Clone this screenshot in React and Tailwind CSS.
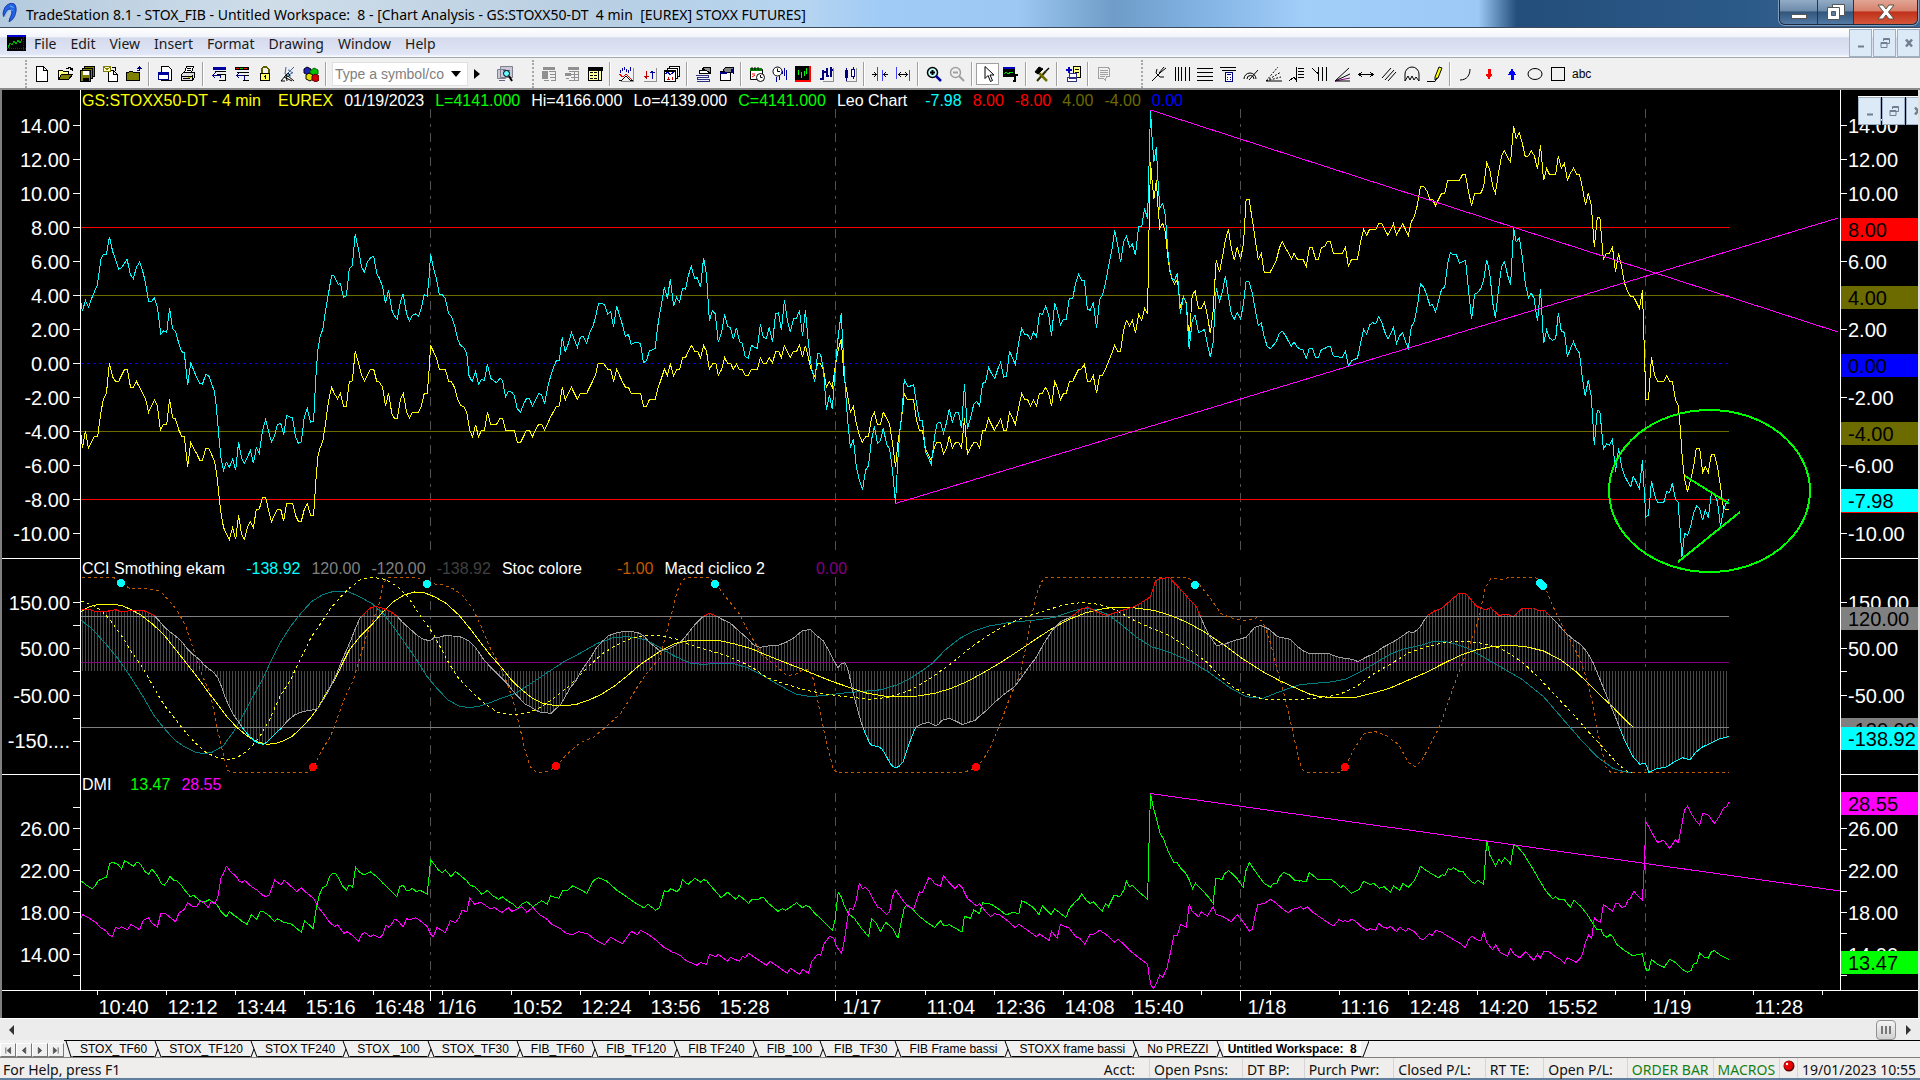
import React from 'react';

// Price and indicator traces. Every series is stored as three tiles, each with
// its own horizontal origin and resolution (points per pixel); vertically three
// points make one pixel.
const TILES = [
  { x: 0, step: 2.376 },
  { x: 640, step: 2.376 },
  { x: 1240, step: 2.306 },
];

const PLOT = { x: 81, y: 90, width: 1759, height: 900 };

const toPoints = (tiles, top) =>
  tiles.flatMap((tile, i) =>
    tile.split(' ').map((pair) => {
      const [px, py] = pair.split(',').map(Number);
      return [TILES[i].x + px / TILES[i].step, top + py / 3];
    })
  );

const leoFast = toPoints(
  [
    '192,636 196,664 203,631 210,652 220,618 231,586 240,506 246,493 253,493 260,440 268,486 275,510 282,538 289,533 302,508 310,555 317,566 324,532 332,516 340,548 346,580 353,634 360,634 367,624 374,652 382,733 389,722 396,727 403,653 410,716 417,724 426,766 432,785 438,788 446,886 453,817 460,840 468,865 475,880 481,883 489,853 496,858 504,885 510,906 514,950 520,1040 525,1105 531,1141 538,1117 545,1131 553,1107 560,1141 567,1055 574,1105 581,1120 588,1101 595,1081 602,1120 609,1073 616,1090 624,1020 631,989 638,1022 645,1057 652,1039 659,1004 667,1000 674,1035 681,976 688,981 695,984 702,1040 709,1060 716,1056 723,980 730,955 738,997 745,993 750,870 755,780 760,742 767,718 773,665 782,600 788,556 794,558 803,583 809,580 816,622 823,618 830,536 837,528 844,433 852,480 859,530 866,547 873,515 880,504 888,499 895,550 902,566 909,590 916,640 923,601 931,660 937,677 944,688 951,636 958,611 966,672 973,694 980,676 987,672 994,679 1001,655 1008,614 1015,618 1019,570 1023,492 1030,535 1037,566 1044,614 1051,614 1058,626 1066,672 1073,680 1080,705 1088,750 1094,766 1102,772 1109,792 1114,856 1122,875 1130,845 1137,883 1144,868 1151,872 1158,823 1166,865 1174,873 1180,878 1188,865 1194,871 1201,920 1208,904 1216,907 1222,917 1229,957 1237,967 1244,942 1251,926 1258,926 1265,948 1272,930 1280,910 1287,914 1294,941 1301,893 1308,860 1315,832 1322,812 1329,811 1336,742 1343,785 1350,762 1358,728 1365,750 1372,772 1379,742 1386,739 1394,760 1401,728 1408,712 1415,682 1422,640 1429,640 1437,645 1444,673 1451,665 1458,712 1465,647 1472,677 1479,705 1486,740 1493,733 1500,764 1508,757 1515,757 1522,762 1529,818 1536,812 1543,782 1550,780 1557,775 1562,715 1567,676',
    '58,592 65,626 72,566 80,648 87,622 94,637 101,595 108,597 115,556 122,529 130,566 136,563 144,592 151,503 158,556 165,692 172,661 179,672 186,757 194,728 201,673 208,709 215,713 222,748 229,713 237,756 243,760 250,800 257,805 265,766 272,772 279,775 286,703 293,743 300,745 307,712 315,757 322,672 329,668 336,720 343,630 350,690 357,727 365,685 372,685 379,661 386,739 393,661 400,760 407,830 415,875 422,790 429,793 436,840 443,961 450,916 457,958 465,820 471,740 478,670 483,790 488,900 494,1000 500,1073 507,1047 514,1130 521,1170 529,1199 536,1140 543,1127 550,1050 557,1009 564,1059 571,1053 578,1015 586,1062 593,1078 600,1140 607,1240 612,1120 617,1030 623,960 628,868 635,888 643,888 650,884 657,940 664,990 671,990 678,1085 685,1103 692,1123 700,1040 706,1000 714,997 721,1029 728,1000 735,956 742,997 750,967 757,969 764,1015 771,883 778,1018 785,985 793,943 800,934 807,949 814,880 821,877 828,832 835,850 843,865 850,838 857,817 864,862 871,858 878,782 885,805 892,823 900,755 907,715 914,733 921,735 928,749 935,727 942,740 949,671 956,673 964,649 971,676 978,737 985,640 992,664 999,706 1006,688 1013,688 1020,625 1028,625 1035,580 1042,553 1049,571 1056,571 1063,658 1070,661 1077,637 1085,715 1092,628 1099,616 1106,580 1113,530 1121,480 1128,421 1135,465 1142,517 1149,455 1156,437 1163,472 1170,463 1177,495 1185,409 1192,410 1199,355 1206,388 1209,250 1213,60 1217,150 1221,215 1227,170 1230,260 1235,355 1242,340 1248,375 1254,480 1259,540 1265,568 1270,570 1277,550 1284,672 1291,619 1298,640 1305,778 1312,690 1319,676 1327,727 1334,725 1341,718 1348,760 1355,802 1362,755 1369,595 1377,634 1384,605 1391,557 1398,620 1405,670 1412,688 1419,667 1427,688 1434,640 1440,574 1447,576 1455,610 1462,660 1469,706 1476,698 1483,740 1490,768 1497,776 1505,766 1512,754 1519,730 1526,724 1534,737 1541,755 1548,769 1554,755 1562,772 1567,776',
    '145,780 153,805 160,774 167,775 174,801 181,801 188,778 195,776 203,769 209,770 215,797 222,800 236,802 243,784 250,828 258,812 271,804 278,760 285,718 292,733 299,704 306,698 313,702 320,679 327,698 334,726 341,747 348,731 354,712 361,760 368,738 375,728 382,757 388,775 395,710 402,695 410,640 416,581 424,592 431,618 438,646 444,643 451,666 458,632 465,598 472,592 479,520 485,488 492,495 499,494 506,520 513,515 520,511 527,600 534,688 541,613 548,608 555,596 562,570 569,509 576,550 583,640 589,684 596,600 603,530 610,515 617,555 624,586 631,415 637,456 644,443 651,500 658,580 665,624 671,608 678,625 686,694 693,596 700,760 707,720 714,745 721,751 728,746 734,668 741,724 748,727 755,800 762,776 769,755 776,778 783,790 789,860 796,919 803,870 810,920 817,1066 824,960 830,964 838,1078 845,1062 852,1066 859,1048 866,1147 873,1075 880,1130 887,1158 894,1175 901,1190 907,1159 914,1177 921,1196 928,1111 932,1200 936,1280 942,1275 949,1172 956,1215 963,1238 970,1236 977,1238 984,1205 991,1207 997,1180 1004,1228 1010,1236 1015,1320 1019,1400 1025,1330 1032,1336 1039,1310 1046,1270 1053,1248 1060,1255 1067,1291 1073,1260 1080,1283 1087,1210 1094,1212 1101,1235 1108,1310 1115,1260 1121,1240 1128,1228',
  ],
  90
);

const leoSlow = toPoints(
  [
    '192,1030 196,1075 203,1022 210,1075 224,1040 232,1040 240,965 246,927 253,908 260,820 268,862 275,874 282,874 289,856 296,838 303,839 310,892 317,892 324,874 332,893 339,910 346,928 353,967 360,947 367,929 374,948 381,1021 388,1003 396,1003 403,928 410,984 417,987 425,1021 432,1039 438,1040 446,1130 453,1057 460,1075 468,1093 475,1111 481,1111 489,1075 496,1075 504,1097 510,1113 516,1165 524,1260 531,1312 538,1332 545,1348 553,1312 560,1348 567,1276 574,1333 581,1348 588,1312 595,1295 602,1312 609,1259 616,1257 624,1222 631,1222 638,1259 645,1295 652,1276 659,1258 667,1258 674,1294 681,1240 695,1240 702,1276 709,1294 716,1294 723,1258 730,1240 738,1276 745,1276 750,1180 755,1100 760,1075 767,1054 773,1005 781,930 788,892 795,912 802,926 809,910 816,948 823,948 830,874 837,873 844,784 852,820 859,856 866,874 873,856 880,838 888,838 895,874 902,877 909,892 916,948 923,910 931,970 937,985 944,985 951,930 958,910 966,967 973,985 980,967 994,967 1001,948 1008,911 1015,911 1019,850 1023,766 1030,785 1037,804 1044,838 1058,838 1066,874 1073,876 1080,892 1088,930 1095,947 1102,950 1109,967 1116,1021 1123,1040 1130,1004 1137,1040 1144,1021 1151,1021 1158,967 1166,1003 1180,1003 1188,985 1194,985 1201,1021 1222,1021 1229,1057 1237,1057 1244,1039 1251,1021 1258,1021 1265,1040 1272,1021 1280,1003 1287,1003 1294,1021 1308,982 1322,949 1329,948 1336,892 1343,930 1350,910 1358,892 1372,928 1379,910 1394,910 1401,892 1415,856 1420,824 1422,820 1434,820 1444,838 1451,838 1458,875 1465,838 1479,875 1486,892 1493,892 1500,910 1522,910 1529,949 1536,948 1543,929 1557,928 1562,900 1567,882',
    '58,838 65,856 72,822 80,858 87,839 94,838 101,803 108,803 115,784 122,766 130,784 137,785 144,803 151,767 158,784 165,838 172,822 180,820 186,857 194,838 201,803 208,820 215,820 222,838 229,822 236,838 243,839 250,857 257,857 265,838 279,838 286,803 293,820 300,820 307,803 315,819 322,785 329,784 336,802 343,767 350,784 357,802 365,784 372,784 379,766 386,802 393,767 400,804 407,840 415,858 422,820 429,822 436,840 443,892 450,875 457,892 465,820 471,780 478,748 485,860 493,915 500,967 507,949 514,1000 521,1035 528,1057 536,1040 543,1039 550,985 557,967 564,1003 571,1004 578,967 586,985 593,1003 600,1060 607,1130 613,1055 621,990 628,911 635,928 650,929 657,990 664,1021 671,1021 678,1075 685,1095 692,1109 700,1070 706,1057 714,1057 721,1093 728,1075 735,1039 742,1075 750,1057 757,1057 764,1075 771,985 778,1093 785,1075 793,1057 800,1057 807,1075 814,1022 821,1021 828,985 835,1003 842,1021 850,1003 857,985 864,1021 871,1021 878,967 885,985 892,1003 900,950 907,911 914,928 921,929 928,949 935,929 942,948 949,910 956,910 964,892 971,911 978,949 985,875 992,893 999,929 1006,911 1013,910 1020,875 1028,874 1035,856 1042,838 1049,837 1056,822 1063,874 1070,875 1077,857 1085,910 1092,857 1099,856 1106,838 1113,815 1121,790 1128,766 1135,784 1142,784 1149,720 1156,692 1163,708 1170,692 1177,729 1185,673 1192,691 1199,655 1206,672 1209,450 1213,217 1217,275 1221,328 1227,270 1230,340 1235,415 1242,400 1248,425 1254,500 1259,545 1265,570 1270,582 1277,568 1284,655 1291,619 1298,640 1305,748 1312,615 1319,603 1327,655 1334,655 1341,637 1348,675 1355,730 1362,660 1369,509 1377,547 1384,500 1391,450 1398,418 1405,475 1412,509 1419,472 1427,508 1434,460 1440,328 1447,328 1455,390 1462,450 1469,509 1476,490 1483,547 1497,547 1505,528 1512,510 1519,475 1526,454 1534,474 1541,490 1548,508 1554,490 1562,508 1567,508',
    '145,508 153,529 160,472 167,472 174,508 181,508 188,472 195,470 202,454 209,455 215,490 236,490 243,472 250,529 257,509 271,508 278,455 285,418 292,436 299,418 313,418 320,400 327,402 334,418 341,436 348,418 354,401 361,436 368,418 375,401 382,420 388,436 395,395 402,380 409,345 416,290 424,290 431,303 438,328 444,328 451,347 458,328 465,310 472,310 479,271 506,271 513,254 520,254 527,305 534,347 541,310 555,310 562,290 569,218 576,240 583,290 589,310 596,250 603,198 610,182 617,202 624,217 631,109 637,146 644,128 651,160 658,200 665,198 672,183 679,198 686,236 693,164 700,271 707,236 714,254 728,254 734,199 741,235 748,220 755,271 762,250 769,235 776,252 783,254 789,290 797,346 803,310 810,345 817,472 824,382 830,382 838,508 845,490 852,490 859,472 866,547 873,490 880,530 887,580 894,605 901,620 907,619 914,637 921,655 928,601 931,720 936,928 942,928 949,802 956,855 963,874 977,874 984,856 991,874 997,875 1004,928 1010,945 1015,1010 1020,1105 1025,1165 1032,1205 1039,1170 1046,1130 1052,1075 1060,1075 1067,1147 1073,1130 1080,1147 1087,1093 1094,1093 1101,1130 1108,1190 1115,1255 1121,1258 1128,1258',
  ],
  90
);

const cci = toPoints(
  [
    '192,178 210,178 225,184 248,185 262,182 275,179 285,184 300,185 310,181 340,181 352,188 365,196 378,212 390,230 403,245 417,258 432,275 446,298 460,315 475,330 485,345 497,357 508,368 518,385 527,412 536,445 545,470 555,495 568,518 580,540 592,558 605,573 615,580 625,583 635,576 645,563 655,550 668,535 685,510 700,495 715,487 730,482 745,479 755,476 765,455 775,435 785,410 797,380 808,345 820,310 832,275 843,240 855,205 868,188 880,174 893,169 905,173 920,180 930,187 943,198 955,215 968,230 980,243 992,257 1005,267 1022,273 1030,264 1045,261 1060,256 1075,258 1090,259 1102,265 1115,274 1127,288 1137,305 1150,330 1165,350 1180,370 1195,388 1207,403 1220,425 1233,442 1245,460 1260,470 1275,482 1285,487 1310,490 1322,475 1333,462 1345,435 1355,413 1367,395 1380,365 1392,343 1405,320 1415,297 1430,275 1445,258 1460,250 1480,245 1500,244 1520,250 1530,258 1545,280 1558,292 1567,302',
    '65,298 85,285 100,272 115,248 130,225 145,205 160,193 165,190 180,197 195,208 215,220 235,243 255,265 270,285 285,292 305,288 325,287 345,278 365,264 385,243 405,238 418,255 435,272 450,305 460,330 470,353 478,342 487,338 493,355 500,390 507,430 515,470 525,515 535,550 545,578 552,587 565,589 575,597 585,618 595,642 605,653 615,650 625,635 635,598 645,562 655,532 670,522 685,517 703,527 710,522 718,511 735,505 748,512 767,524 780,517 795,512 810,495 825,480 840,460 865,433 890,410 905,385 920,358 940,325 960,280 980,240 1000,215 1025,200 1045,180 1063,171 1080,182 1108,197 1135,185 1170,172 1185,163 1213,140 1225,92 1238,85 1258,83 1272,102 1290,125 1305,148 1322,170 1335,210 1350,252 1370,287 1390,282 1410,272 1440,262 1460,233 1475,226 1495,238 1515,260 1545,268 1562,290 1567,294',
    '145,302 157,309 205,311 220,319 240,325 260,328 272,335 290,322 310,310 330,292 350,278 370,262 388,245 400,248 415,232 425,210 433,196 450,182 465,175 485,152 505,130 520,130 535,152 545,168 565,180 578,173 597,196 615,193 630,200 650,176 675,174 690,183 702,182 715,198 730,218 745,240 765,265 785,283 800,305 815,340 830,388 850,452 870,515 885,565 905,618 922,643 935,640 943,667 960,657 985,650 1000,637 1020,623 1038,629 1050,608 1065,592 1085,580 1105,567 1120,562 1128,560',
  ],
  550
);

const macdSolid = toPoints(
  [
    '192,185 205,175 222,166 245,162 265,162 290,167 310,178 335,195 365,225 390,255 415,295 440,335 465,375 490,418 515,460 540,502 565,535 590,560 610,575 635,583 655,580 675,572 695,558 715,535 735,508 755,475 775,430 795,390 812,345 830,300 855,260 885,222 910,185 935,155 960,135 985,126 1010,129 1035,142 1060,160 1090,195 1115,233 1140,275 1165,315 1190,350 1215,390 1240,420 1265,445 1290,460 1320,467 1345,467 1370,463 1400,450 1430,432 1460,408 1490,378 1520,345 1567,305',
    '60,295 85,280 115,272 150,271 190,272 225,282 265,296 300,315 340,335 380,355 420,376 460,396 500,413 540,430 580,438 620,440 660,438 700,430 740,415 780,393 820,365 860,335 900,302 940,268 980,235 1020,208 1060,188 1100,176 1135,171 1170,173 1220,181 1260,196 1300,217 1340,245 1390,287 1430,325 1480,365 1520,392 1567,419',
    '160,432 185,440 220,443 270,441 310,428 345,415 385,392 430,367 470,340 510,315 545,300 580,290 620,286 660,290 700,303 740,330 775,365 805,402 830,435 855,465 885,505 905,530',
  ],
  550
);

const macdTeal = toPoints(
  [
    '192,210 220,238 250,280 280,325 310,380 340,440 365,495 390,535 415,570 440,592 465,607 485,611 505,606 530,588 555,545 580,490 605,430 625,385 645,330 665,280 690,230 715,190 740,155 765,135 790,125 825,124 855,140 885,162 910,190 935,230 960,275 985,320 1015,380 1040,418 1065,450 1090,468 1115,473 1140,468 1165,458 1190,445 1225,430 1260,402 1300,368 1340,335 1385,305 1420,280 1455,264 1485,260 1510,262 1535,270 1567,292',
    '55,300 85,320 120,340 150,343 190,340 225,342 255,353 290,375 330,405 370,432 405,440 440,436 490,428 540,423 575,419 610,405 640,387 670,362 695,340 725,300 760,265 795,242 830,228 880,217 940,210 985,202 1030,182 1060,174 1085,180 1110,193 1140,220 1180,262 1215,290 1260,308 1310,335 1350,365 1400,412 1440,440 1480,445 1520,425 1567,404',
    '170,400 205,397 245,387 285,360 320,333 350,310 380,296 420,285 440,276 470,274 495,282 525,295 560,320 600,350 650,388 700,440 750,515 790,575 825,622 860,655 885,665 905,667',
  ],
  550
);

const macdDashed = toPoints(
  [
    '192,153 215,162 240,180 265,215 290,260 315,310 340,355 365,412 390,465 415,505 440,545 465,580 490,608 515,622 540,629 565,622 590,600 615,565 640,510 665,440 690,390 715,325 740,260 765,215 785,175 810,140 830,115 855,90 885,82 915,88 945,110 970,142 1000,200 1030,252 1060,325 1085,378 1120,425 1155,465 1185,488 1220,494 1260,486 1290,468 1320,440 1355,405 1390,360 1430,312 1465,285 1500,265 1530,257 1567,256',
    '50,258 90,268 115,283 160,300 200,315 240,335 270,355 300,382 340,400 385,418 430,430 475,438 510,443 550,448 590,442 640,422 690,385 740,340 780,298 820,262 870,225 910,203 950,187 1000,167 1050,157 1090,163 1130,180 1180,215 1220,237 1260,258 1300,292 1345,335 1380,380 1410,412 1440,432 1480,447 1530,448 1567,448',
    '145,448 190,443 230,433 270,408 310,370 350,340 390,308 430,290 475,277 515,274 560,280 600,295 650,335 690,385 730,440 770,495 800,540 835,590 870,640 890,662 905,667',
  ],
  550
);

const stochastic = toPoints(
  [
    '195,82 270,82 290,100 310,117 350,116 380,123 400,150 420,180 440,225 460,300 480,375 500,430 515,530 530,610 540,660 548,667 730,667 744,655 765,600 785,560 800,510 820,440 840,390 855,325 870,260 885,215 900,165 908,110 918,83 990,82 1015,100 1050,104 1075,115 1100,137 1125,180 1145,235 1165,295 1185,340 1205,400 1220,455 1235,530 1245,590 1260,650 1275,667 1300,665 1321,650 1345,615 1380,577 1410,562 1440,530 1475,490 1500,440 1520,400 1540,365 1567,325',
    '60,262 75,190 88,125 100,92 112,82 160,82 178,95 200,135 235,190 260,250 290,315 320,345 350,377 370,373 385,360 400,357 412,388 425,470 445,590 460,660 468,667 770,667 795,655 815,630 835,585 855,525 875,455 892,405 905,365 920,270 930,200 945,120 960,83 1300,82 1330,105 1355,145 1380,190 1400,202 1440,213 1465,203 1480,215 1497,275 1510,340 1530,430 1550,540 1567,635',
    '142,655 150,667 232,667 243,650 262,600 285,552 310,544 335,555 365,583 390,640 405,650 420,630 440,580 460,530 480,455 505,365 525,300 545,230 555,180 565,115 578,86 610,88 620,82 680,82 698,95 715,150 740,220 765,280 785,330 800,390 815,470 830,580 845,655 855,667 1128,667',
  ],
  550
);

const dmiPlus = toPoints(
  [
    '192,992 205,1005 218,1016 225,1010 233,992 245,985 253,982 260,942 268,937 280,943 289,957 296,933 303,937 310,943 317,949 325,937 332,940 345,965 353,972 361,957 368,968 376,982 383,1000 390,1006 397,996 404,979 412,990 420,993 432,1008 440,1022 452,1040 460,1036 475,1052 482,1058 497,1049 515,1063 525,1085 538,1100 545,1084 555,1095 565,1104 575,1114 587,1123 597,1094 610,1108 618,1086 625,1084 640,1098 652,1114 660,1106 675,1118 690,1120 705,1135 716,1147 724,1112 735,1125 744,1136 750,1085 758,1038 766,1013 775,1008 783,980 790,970 797,970 805,985 812,1005 823,1020 830,1005 838,1012 845,952 855,967 865,975 880,966 895,980 910,1000 925,1018 943,1040 950,1010 958,1006 966,1022 975,1020 980,1015 988,1024 1000,1022 1015,1032 1019,985 1023,930 1033,945 1040,958 1050,968 1058,960 1072,980 1082,964 1095,978 1107,990 1117,1005 1130,1012 1145,1033 1158,1021 1170,1037 1185,1048 1193,1040 1208,1054 1220,1063 1230,1076 1240,1062 1252,1055 1266,1070 1287,1052 1300,1063 1308,1038 1328,1045 1338,1021 1350,1020 1360,1008 1372,1014 1394,1030 1400,1015 1410,992 1422,983 1440,992 1452,1005 1465,1020 1480,1033 1497,1048 1515,1063 1530,1073 1540,1063 1558,1081 1567,1073',
    '58,1022 66,1026 73,1016 88,1025 95,1015 101,989 108,998 115,1002 130,985 145,997 151,989 158,992 170,1010 193,1043 208,1027 228,1048 236,1036 258,1060 266,1048 280,1050 287,1043 294,1043 305,1060 328,1084 338,1076 345,1081 352,1076 372,1058 386,1073 393,1067 402,1070 415,1090 430,1106 443,1123 457,1141 463,1112 471,1027 478,1040 486,1068 495,1090 510,1106 525,1133 543,1160 550,1106 560,1118 571,1145 584,1117 600,1135 613,1165 620,1120 628,1074 635,1065 650,1080 660,1095 680,1115 700,1132 714,1112 722,1127 735,1124 765,1146 771,1099 785,1105 793,1080 807,1091 814,1058 835,1063 850,1075 870,1095 885,1087 900,1091 907,1052 920,1060 935,1073 948,1094 956,1067 977,1094 985,1076 1012,1103 1020,1076 1035,1054 1042,1048 1049,1031 1060,1050 1070,1061 1077,1055 1098,1084 1106,1061 1113,1070 1127,1035 1140,1040 1150,1020 1156,992 1163,1010 1170,1006 1185,1025 1206,1048 1209,900 1213,730 1220,775 1227,805 1235,848 1245,870 1255,905 1268,937 1275,936 1285,955 1298,972 1305,990 1313,1016 1320,1000 1335,1020 1348,1037 1362,1060 1368,985 1383,988 1390,970 1398,962 1405,968 1418,985 1433,1012 1440,960 1448,938 1458,957 1470,978 1483,1000 1498,1012 1505,1000 1513,1000 1520,980 1530,967 1543,975 1555,990 1567,993',
    '140,992 153,995 160,967 180,990 200,987 212,990 225,1003 232,1013 238,1006 257,1030 275,1018 285,994 300,1004 308,1000 322,1015 332,1010 347,1027 354,1007 368,1021 376,1000 388,1012 400,995 410,970 416,949 428,960 440,970 458,983 466,974 472,978 480,955 486,960 492,953 506,965 514,963 522,980 533,994 541,1000 548,991 562,1003 566,930 569,870 576,915 589,948 597,928 603,938 610,924 616,930 624,942 631,885 640,890 655,913 665,935 677,960 690,990 705,1022 721,1046 728,1040 735,1048 747,1048 762,1072 770,1051 785,1068 800,1092 817,1127 824,1140 832,1137 838,1155 846,1162 853,1154 860,1160 868,1182 885,1200 905,1217 928,1211 932,1240 938,1262 943,1260 949,1228 962,1243 978,1252 991,1228 1005,1238 1020,1258 1032,1267 1040,1262 1045,1243 1053,1240 1060,1210 1072,1223 1080,1224 1087,1205 1094,1202 1108,1216 1128,1229',
  ],
  550
);

const dmiMinus = toPoints(
  [
    '192,1105 197,1094 213,1105 230,1120 238,1132 252,1143 260,1156 267,1160 275,1132 282,1136 289,1130 303,1139 311,1123 332,1139 340,1112 353,1103 360,1118 374,1131 382,1090 394,1092 405,1103 417,1115 425,1090 438,1078 446,1058 458,1070 468,1068 475,1054 482,1054 495,1073 502,1055 509,1062 517,1045 525,985 532,968 538,949 550,968 562,980 568,993 575,997 582,992 595,1007 610,1020 625,1036 632,1040 640,1034 653,990 668,1005 675,990 688,1005 705,1025 716,1013 725,1025 745,1045 755,1070 768,1090 782,1115 795,1130 802,1124 817,1150 825,1145 837,1156 852,1174 860,1153 867,1148 880,1160 888,1154 902,1163 909,1155 917,1126 924,1132 931,1122 938,1107 945,1112 958,1130 966,1106 973,1109 988,1103 1002,1115 1015,1130 1025,1156 1030,1160 1038,1132 1058,1148 1070,1112 1082,1118 1090,1105 1098,1081 1109,1085 1116,1045 1128,1063 1142,1057 1165,1076 1175,1073 1192,1088 1208,1073 1216,1084 1240,1070 1252,1087 1266,1072 1280,1092 1300,1108 1312,1124 1330,1135 1345,1150 1360,1154 1375,1145 1397,1152 1412,1168 1436,1184 1451,1162 1465,1172 1479,1181 1500,1144 1515,1154 1522,1141 1540,1153 1558,1170 1567,1180',
    '57,1192 75,1205 95,1216 110,1232 136,1246 144,1237 158,1244 165,1213 180,1220 186,1213 208,1234 215,1222 236,1234 244,1219 250,1224 258,1210 300,1246 309,1234 328,1250 350,1270 357,1255 379,1273 387,1258 400,1270 408,1235 422,1213 429,1216 438,1180 451,1159 460,1165 468,1192 479,1210 486,1170 493,1105 498,1075 507,1078 514,1050 521,1000 529,1016 536,1012 545,1025 555,1050 565,1072 572,1075 586,1094 593,1085 600,1040 607,1019 621,1045 635,1068 650,1077 658,1048 664,1026 671,1027 686,984 693,988 700,1001 714,1009 721,977 735,998 749,1016 757,1003 765,1012 778,1045 800,1068 807,1061 820,1083 833,1099 843,1091 855,1095 873,1112 892,1133 900,1122 914,1135 942,1160 949,1152 972,1171 978,1144 991,1165 999,1123 1020,1135 1035,1160 1045,1165 1057,1183 1070,1152 1077,1154 1092,1141 1107,1153 1128,1177 1136,1168 1150,1183 1163,1201 1185,1223 1206,1243 1210,1280 1214,1305 1220,1315 1227,1300 1235,1274 1242,1282 1252,1255 1260,1210 1269,1155 1277,1156 1284,1123 1298,1132 1305,1063 1312,1084 1327,1100 1334,1086 1348,1098 1362,1070 1369,1093 1385,1100 1405,1115 1419,1094 1434,1117 1448,1143 1455,1138 1462,1095 1468,1064 1484,1060 1498,1048 1512,1060 1525,1075 1540,1089 1550,1078 1567,1073',
    '139,1069 147,1078 155,1070 168,1087 185,1102 210,1124 216,1127 229,1108 236,1114 243,1112 250,1115 257,1108 265,1112 280,1130 293,1141 300,1136 313,1141 320,1120 328,1130 340,1135 347,1129 361,1145 368,1132 382,1144 388,1135 402,1145 415,1165 422,1170 437,1151 443,1156 452,1141 465,1147 485,1163 505,1178 520,1193 527,1170 534,1159 548,1170 555,1173 562,1147 569,1177 582,1199 590,1184 600,1208 617,1218 624,1196 632,1212 645,1223 659,1205 677,1231 686,1212 692,1225 700,1205 712,1205 725,1218 740,1229 748,1240 755,1223 775,1237 785,1225 790,1210 797,1175 804,1155 811,1165 817,1103 824,1112 831,1117 838,1063 850,1075 859,1084 866,1062 873,1061 880,1072 888,1070 895,1050 900,1047 908,1024 915,1034 928,1050 932,950 936,817 943,830 955,860 963,877 977,871 991,895 1004,870 1011,878 1018,830 1025,780 1032,769 1040,790 1053,815 1060,825 1067,790 1080,795 1094,820 1105,800 1115,775 1122,770 1128,757',
  ],
  550
);

const LAST_BAR = 1729;
const DAY_LINES = [430.5, 835.5, 1240.5, 1645.5];

// one grey bar every three pixels, from the zero line to the CCI curve
const histogram = () => {
  const zero = 671;
  const bars = [];
  let i = 0;
  for (let x = 82.5; x <= LAST_BAR; x += 3) {
    while (i < cci.length - 2 && cci[i + 1][0] < x) i += 1;
    const [x0, y0] = cci[i];
    const [x1, y1] = cci[i + 1];
    const y = y0 + ((y1 - y0) * (x - x0)) / (x1 - x0);
    bars.push(`M${x} ${zero}V${Math.round(y)}`);
  }
  return bars.join('');
};

const Trace = ({ points, stroke, dash, width = 1, clip }) => (
  <polyline
    points={points.map((p) => `${p[0].toFixed(1)},${p[1].toFixed(1)}`).join(' ')}
    fill="none"
    stroke={stroke}
    strokeWidth={width}
    strokeDasharray={dash}
    clipPath={clip}
    vectorEffect="non-scaling-stroke"
  />
);

const HLine = ({ y, stroke, dash }) => (
  <line x1={81} x2={LAST_BAR} y1={y} y2={y} stroke={stroke} strokeDasharray={dash} vectorEffect="non-scaling-stroke" />
);

const Plot = () => (
  <svg
    className="absolute inset-0 h-full w-full"
    viewBox={`${PLOT.x} ${PLOT.y} ${PLOT.width} ${PLOT.height}`}
    preserveAspectRatio="none"
    shapeRendering="crispEdges"
  >
    <clipPath id="above"><rect x="81" y="570" width="1760" height="46" /></clipPath>
    <clipPath id="between"><rect x="81" y="616" width="1760" height="111" /></clipPath>
    <clipPath id="below"><rect x="81" y="727" width="1760" height="48" /></clipPath>

    {DAY_LINES.map((x) => (
      <path key={x} d={`M${x} 109V555M${x} 577V771M${x} 793V987`} stroke="#505050" strokeDasharray="9 6 3 6" fill="none" />
    ))}

    <HLine y={227.5} stroke="#ff0000" />
    <HLine y={295.5} stroke="#6b6b00" />
    <HLine y={363.5} stroke="#0000ff" dash="3 3" />
    <HLine y={431.5} stroke="#6b6b00" />
    <HLine y={499.5} stroke="#ff0000" />
    <Trace points={leoSlow} stroke="#ffff00" />
    <Trace points={leoFast} stroke="#00ffff" />
    <Trace points={[[1150.5, 110], [1838, 332]]} stroke="#ff00ff" />
    <Trace points={[[895.5, 503.5], [1838, 218]]} stroke="#ff00ff" />

    <path d={histogram()} stroke="#484848" fill="none" />
    <HLine y={616.5} stroke="#808080" />
    <HLine y={662.5} stroke="#800080" />
    <HLine y={727.5} stroke="#808080" />
    <Trace points={stochastic} stroke="#c05a00" dash="3 3" />
    <Trace points={macdTeal} stroke="#008080" />
    <Trace points={macdDashed} stroke="#ffff00" dash="3 3" />
    <Trace points={macdSolid} stroke="#ffff00" />
    <Trace points={cci} stroke="#ff0000" clip="url(#above)" />
    <Trace points={cci} stroke="#a0a0a0" clip="url(#between)" />
    <Trace points={cci} stroke="#00ffff" clip="url(#below)" />
    {[[121, 583], [427, 584], [715, 584], [1195, 585], [1540, 583], [1543, 586]].map(([x, y]) => (
      <circle key={x} cx={x} cy={y} r="4" fill="#00ffff" />
    ))}
    {[[313, 767], [556, 766], [976, 767], [1345, 767]].map(([x, y]) => (
      <circle key={x} cx={x} cy={y} r="4" fill="#ff0000" />
    ))}

    <Trace points={dmiPlus} stroke="#00ff00" />
    <Trace points={dmiMinus} stroke="#ff00ff" />
    <Trace points={[[1150.5, 793.5], [1840, 891]]} stroke="#ff00ff" />

    <ellipse cx="1709.5" cy="491" rx="100.5" ry="81" fill="none" stroke="#00ff00" strokeWidth="2" />
    <Trace points={[[1685, 476], [1729, 503.5]]} stroke="#00ff00" width={2} />
    <Trace points={[[1678, 562], [1740, 512]]} stroke="#00ff00" width={2} />
  </svg>
);

const pctY = (y) => `${(y - PLOT.y) / 9}%`;
const pctX = (x) => `${((x - 2) / 1916) * 100}%`;

const range = (from, to, by) => {
  const out = [];
  for (let v = from; v >= to; v -= by) out.push(v);
  return out;
};

const TICKS = [
  ...range(14, -10, 2).map((v) => ({ y: 363.5 - v * 17, label: v.toFixed(2) })),
  { y: 602.5, label: '150.00' },
  { y: 625.5 },
  { y: 648.5, label: '50.00' },
  { y: 671.5 },
  { y: 695.5, label: '-50.00' },
  { y: 718.5 },
  { y: 741.5, label: '-150....' },
  ...range(28, 12, 2).map((v) => ({
    y: Math.round(828 + (26 - v) * 10.5) + 0.5,
    label: v % 4 === 2 && v > 12 ? v.toFixed(2) : undefined,
  })),
];

const TAGS = [
  { y: 218, label: '8.00', fill: '#ff0000' },
  { y: 286, label: '4.00', fill: '#6b6b00' },
  { y: 354, label: '0.00', fill: '#0000ff' },
  { y: 422, label: '-4.00', fill: '#6b6b00' },
  { y: 490, label: '', fill: '#ff0000' },
  { y: 489, label: '-7.98', fill: '#00ffff' },
  { y: 607, label: '120.00', fill: '#808080' },
  { y: 718, label: '-120.00', fill: '#808080' },
  { y: 727, label: '-138.92', fill: '#00ffff' },
  { y: 792, label: '28.55', fill: '#ff00ff' },
  { y: 951, label: '13.47', fill: '#00ff00' },
];

const AxisText = ({ y, dy, ...rest }) => (
  <svg y={pctY(y)} className="overflow-visible">
    <text y={dy} className="font-['Liberation_Sans',Arial,sans-serif] text-[20px]" {...rest} />
  </svg>
);

const LeftAxis = () => (
  <svg className="h-full w-[79px] shrink-0">
    <line x1="78.5" x2="78.5" y1="0" y2="100%" stroke="#fff" />
    {[558.5, 774.5].map((y) => (
      <line key={y} x1="0" x2="78" y1={pctY(y)} y2={pctY(y)} stroke="#fff" />
    ))}
    {TICKS.map(({ y, label }) => (
      <React.Fragment key={y}>
        <line x1="71" x2="78" y1={pctY(y)} y2={pctY(y)} stroke="#fff" />
        {label && <AxisText y={y} dy={7} x="68" fill="#fff" textAnchor="end">{label}</AxisText>}
      </React.Fragment>
    ))}
  </svg>
);

const RightAxis = () => (
  <svg className="h-full w-[78px] shrink-0">
    <line x1="0.5" x2="0.5" y1="0" y2="100%" stroke="#fff" />
    {[558.5, 774.5].map((y) => (
      <line key={y} x1="0" x2="78" y1={pctY(y)} y2={pctY(y)} stroke="#fff" />
    ))}
    {TICKS.map(({ y, label }) => (
      <React.Fragment key={y}>
        <line x1="0" x2="7" y1={pctY(y)} y2={pctY(y)} stroke="#fff" />
        {label && label !== '-150....' && <AxisText y={y} dy={7} x="8" fill="#fff">{label}</AxisText>}
      </React.Fragment>
    ))}
    {TAGS.map(({ y, label, fill }) => (
      <React.Fragment key={y}>
        <rect x="1" y={pctY(y)} width="77" height="23" fill={fill} />
        <AxisText y={y} dy={19} x="8" fill="#000">{label}</AxisText>
      </React.Fragment>
    ))}
  </svg>
);

const TIMES = [
  [97.5, '10:40'], [166.5, '12:12'], [235.5, '13:44'], [304.5, '15:16'], [373.5, '16:48'],
  [442.5], [511.5, '10:52'], [580.5, '12:24'], [649.5, '13:56'], [718.5, '15:28'], [787.5],
  [856.5], [925.5, '11:04'], [994.5, '12:36'], [1063.5, '14:08'], [1132.5, '15:40'], [1201.5],
  [1270.5], [1339.5, '11:16'], [1408.5, '12:48'], [1477.5, '14:20'], [1546.5, '15:52'], [1615.5],
  [1684.5], [1753.5, '11:28'], [1822.5],
];
const DAYS = ['1/16', '1/17', '1/18', '1/19'];

const TimeAxis = () => (
  <svg className="h-7 w-full shrink-0 bg-black font-['Liberation_Sans',Arial,sans-serif] text-[20px]">
    <line x1="0" x2="100%" y1="0.5" y2="0.5" stroke="#fff" />
    {TIMES.map(([x, label]) => (
      <React.Fragment key={x}>
        <line x1={pctX(x)} x2={pctX(x)} y1="0" y2="5" stroke="#fff" />
        {label && <text x={pctX(x + 1)} y="24" fill="#fff">{label}</text>}
      </React.Fragment>
    ))}
    {DAY_LINES.map((x, i) => (
      <React.Fragment key={x}>
        <line x1={pctX(x)} x2={pctX(x)} y1="0" y2="11" stroke="#fff" />
        <text x={pctX(x + 7)} y="24" fill="#fff">{DAYS[i]}</text>
      </React.Fragment>
    ))}
  </svg>
);

const I = ({ children, smooth }) => (
  <svg viewBox="0 0 16 16" className="h-4 w-4" fill="none" stroke="#000" shapeRendering={smooth ? undefined : 'crispEdges'}>
    {children}
  </svg>
);

const BackWindow = ({ bar }) => (
  <I>
    <path d="M2 1h13v3h-13z" fill={bar} stroke="none" />
    <path d="M4 5.500h11M6 8.500h9M8 14.500h6.500v-6" />
    <path d="M1 9.500h8M4.500 6.500l-3 3l3 3M9.500 9v3" stroke="#000080" />
  </I>
);

const FILE_TOOLS = [
  ['New', <I><path d="M2.500 .5h7l4 4v11h-11zM9.500 .5v4h4" fill="#fff" /></I>],
  ['Open', <I><path d="M1.500 13.500v-9h4l1 1h5v3" fill="#ffff80" /><path d="M1.500 13.500l3-5h11l-4 5z" fill="#808000" /><path d="M9 2.500h2l1-1h1l2 2v-2m0 2h-2" /></I>],
  ['Save all', <I><path d="M4.500 .5h10v10h-10z" fill="#808000" /><path d="M2.500 2.500h10v10h-10z" fill="#808000" /><path d="M.5 4.500h10v11h-10z" fill="#808000" /><path d="M2.500 5h6v4h-6z" fill="#fff" stroke="none" /><path d="M3 12h5v3h-5z" fill="#000" /></I>],
  ['Import', <I><path d="M5.500 4.500h5l4 4v7h-9zM10.500 4.500v4h4" fill="#fff" /><path d="M.5 .5h7v5h-7zM.5 .5l3.500 3l3.500-3" fill="#ffffc0" stroke="#808000" /><path d="M9 1.500h3v3" /></I>],
  ['Close workspace', <I><path d="M.5 14.500v-8h2l1-1h3l1 1h6v8z" fill="#808000" /><path d="M11 4.500h2.500v-3m0 3v-3.500m-2 2l2-2l2 2" stroke="#000080" /></I>],
  null,
  ['Preview', <I><path d="M4.500 .5h7l3 3v11h-10z" fill="#fff" /><path d="M1.500 6.500h10v7h-10z" fill="#fff" stroke="#000080" /><path d="M1 6h11v3h-11z" fill="#0000a0" stroke="none" /></I>],
  ['Print', <I><path d="M4.500 7l2-6.500h7l-2 6.500" fill="#fff" /><path d="M7 2.500h4M6.500 4.500h4" /><path d="M1.500 8.500l2-2h11v5l-2 3h-11z" fill="#ddd" /><path d="M2 10.500h10M3 12.500h7M12.500 9v5" /><path d="M8 11.500h3" stroke="#c0c000" /></I>],
  null,
  ['Send back', <BackWindow bar="#0000a0" />],
  ['Send chart back', <I><path d="M1 1h14v3h-14z" fill="#000" stroke="none" /><path d="M2 2h3v1h-3zM10 2h3v1h-3z" fill="#f00" stroke="none" /><path d="M6 2h3v1h-3z" fill="#0c0" stroke="none" /><path d="M3 6.500h12M7 9.500h8M9 14.500h6" /><path d="M2 9.500h8M5.500 6.500l-3 3l3 3M10.500 10v4" stroke="#000080" /></I>],
  ['Lock', <I><path d="M4.500 7v-4l2-2h3l2 2v4" stroke="#606000" strokeWidth="2" /><path d="M3.500 7.500h9v7h-9z" fill="#ffff60" /><path d="M8 9v4M7 10.500h2" /></I>],
  ['Connect', <I smooth><path d="M8 7l6-6M8 4c2 0 4 2 4 4M9 9l4-3M6 1l-1 7l6 2" stroke="#4060a0" /><path d="M1 15l5-6l1 6M4 11l8 4M8 10l6 5M1 15h4" /><circle cx="8" cy="9" r="1.500" fill="#80e0ff" /></I>],
  ['Network', <I smooth><path d="M1 3l3-2l4 2v4l-3 2l-4-2z" fill="#2020c0" /><path d="M7 5l4-3l4 2v4l-4 2l-4-2z" fill="#00c000" stroke="#060" /><path d="M3 9l3-2l4 2v4l-3 2l-4-2z" fill="#e0e000" /><path d="M9 10l3-2l4 2v4l-3 2l-4-2z" fill="#d00000" stroke="#500" /></I>],
  null,
];

const PICK_TOOLS = [
  ['Look up symbol', <I smooth><path d="M.5 3.500h8v9h-8zM3.500 .5h12v11h-12z" fill="#c8c8d8" stroke="#808090" /><path d="M6 4.500h7M6 7h7M2 14.500h6" stroke="#606080" /><circle cx="9.500" cy="7.500" r="3" fill="#60ffff" /><path d="M12 10l3 5" strokeWidth="2" /></I>],
];

const CHART_TOOLS = [
  ['Insert row', <I><path d="M2 1h12v3h-12zM1 5h6v8h-6z" fill="#909090" stroke="none" /><path d="M8 5.500h6v9h-4M9 8.500h5M9 11.500h5M3 7l3 3m0-3l-3 3M3 14.500h5" stroke="#909090" /></I>],
  ['Append row', <I><path d="M4 1h11v3h-11zM1 7h6v3h-6z" fill="#909090" stroke="none" /><path d="M5 5.500h9v9h-9M7 8.500h7M7 11.500h7M10.500 5v9M2 12.500h3" stroke="#909090" /></I>],
  ['Data table', <I><path d="M1.500 1.500h13v13h-13z" fill="#ffffa0" /><path d="M1 1h14v3h-14z" fill="#000" /><path d="M3 6.500h3M7 6.500h3M3 9.500h3M7 9.500h3M3 12.500h3M7 12.500h3M11.500 4v10" /></I>],
  null,
  ['Analysis', <I><path d="M15.500 2v13.500h-13" stroke="#909090" /><path d="M2.500 4v3M4.500 2v3M6.500 1v3M8.500 3v3M10.500 4v3M12.500 1v4" stroke="#0000a0" /><path d="M1 8l4 3l3-3l6 6" stroke="#f00000" /><path d="M1 14h3l4-4l4 4h3" /></I>],
  ['Strategies', <I><path d="M15.500 2v13.500h-13" stroke="#909090" /><path d="M5 5v8M2.500 10.500h5M4 11.500h2" stroke="#c00000" /><path d="M11 13v-8M8.500 6.500h5M10 5.500h2" stroke="#0000a0" /></I>],
  ['Multi chart', <I><path d="M5.500 .5h10v10h-10z" fill="#fff" /><path d="M3.500 2.500h10v10h-10z" fill="#fff" /><path d="M.5 4.500h11v11h-11z" fill="#fff" /><path d="M1 8l3-2l2 3l4-3" stroke="#0000c0" /><path d="M4 11v3m-1-1h3M8.500 14v-3" stroke="#c00" /><path d="M1 5h10" strokeWidth="2" /></I>],
  null,
  ['Format window', <I><path d="M4.500 4.500h10v3h-10z" fill="#fff" /><path d="M7 3l3-2l5 0v6l-3-2z" fill="#909090" /><path d="M1 9.500h12v2h-11v2h12v2h-12" stroke="#303080" /></I>],
  ['Format data', <I><path d="M2.500 5.500h10v9h-10z" fill="#fff" /><path d="M5 4l3-3l7 0v6l-4-1l-3 1z" fill="#808080" /><path d="M2 7h7M13.500 3v4" stroke="#000080" strokeWidth="2" /></I>],
  null,
  ['Sessions', <I smooth><path d="M1.500 3.500h12v10h-12z" fill="#fff" /><path d="M1 2h12v3h-12z" fill="#008000" stroke="none" /><path d="M3 1v3M6 1v3M9 1v3" /><path d="M3 8h3M3 11l3-2" stroke="#f00" /><circle cx="11.500" cy="11.500" r="4" fill="#fff" /><path d="M11.500 9v2.500h2" /></I>],
  ['Interval', <I smooth><circle cx="5.500" cy="5.500" r="4.500" fill="#fff" /><path d="M5.500 2.500v3h2.500" /><path d="M4.500 11v5M7.500 10v4M12.500 2v8M14.500 4v10M10.500 5v3" stroke="#0000a0" /></I>],
  ['Colours', <I><path d="M0 0h16v16h-16z" fill="#000" stroke="none" /><path d="M15 0v15h-15" stroke="#f00" strokeWidth="2" /><path d="M3.500 4v5M6.500 6v6M9.500 5v5M11.500 2v6" stroke="#00ff00" /></I>],
  ['OHLC bars', <I><path d="M15.500 2v13.500h-11" stroke="#909090" /><path d="M4.500 4v10M2 12.500h3M5 5.500h3M8.500 2v9M8 9.500h3M12 3.500h3M12.500 1v10" stroke="#000080" strokeWidth="2" /></I>],
  ['Candlesticks', <I><path d="M15.500 2v13.500h-11" stroke="#909090" /><path d="M4 4h3v8h-3z" fill="#000080" stroke="none" /><path d="M5.500 2v13" stroke="#000080" /><path d="M10.500 3.500h3v7h-3zM12 1v2M12 11v2" fill="#fff" stroke="#000080" /></I>],
  null,
  ['Narrow bars', <I><path d="M5.500 1v14M10.500 4v11" stroke="#4040ff" /><path d="M0 8.500h4M2 6l2.500 2.500l-2.500 2.500M16 8.500h-4M14 6l-2.500 2.500l2.500 2.500" /></I>],
  ['Widen bars', <I><path d="M1.500 1v12M14.500 4v11" stroke="#4040ff" /><path d="M3 8.500h10M6 6l-2.500 2.500l2.500 2.500M10 6l2.500 2.500l-2.500 2.500" /></I>],
  null,
  ['Zoom in', <I smooth><circle cx="6.500" cy="6.500" r="5" fill="#c0ffff" strokeWidth="1.500" /><path d="M4 6.500h5M6.500 4v5" strokeWidth="2" /><path d="M10 10l5 5" stroke="#0000a0" strokeWidth="2.500" /></I>],
  ['Zoom out', <I smooth><circle cx="6.500" cy="6.500" r="5" stroke="#a0a0a0" strokeWidth="1.500" /><path d="M4 6.500h5M10 10l5 5" stroke="#a0a0a0" strokeWidth="2" /></I>],
  null,
  ['Pointer', <I smooth><path d="M5 .5v12l3-3l2.500 6l2-1l-2.500-5.500h4z" fill="#fff" /></I>, true],
  ['Data tip', <I><path d="M0 1h12v10h-12z" fill="#000" stroke="none" /><path d="M0 1.500h12" stroke="#0000c0" strokeWidth="2" /><path d="M1 8l2-2l2 2l3-2l2 1" stroke="#00e000" /><path d="M8 8.500h7M11.500 8v7M10 15h3" strokeWidth="2" /></I>],
  null,
  ['Customize', <I smooth><path d="M3 15l9-10" stroke="#303000" strokeWidth="2" /><path d="M3 5l10 10" stroke="#707000" strokeWidth="2.500" /><path d="M1 6l4-5l4 2l-5 5z" fill="#000" /><path d="M12 5l3-3" strokeWidth="1.500" /></I>],
  null,
  ['Add page', <I><path d="M8.500 .5h7v11h-7z" fill="#ffff80" /><path d="M10 3.500h4M10 6.500h4" /><path d="M4.500 7.500h7v5h-7zM2.500 11.500h9v4h-9z" fill="#fff" stroke="#303080" /><path d="M1 3.500h6M4 .5v6" stroke="#0000c0" strokeWidth="2" /></I>],
  null,
  ['Notes', <I><path d="M2.500 1.500h10l1 2v7h-3l-1 4l-2-2h-5z" stroke="#a0a0a0" /><path d="M4 4.500h8M4 6.500h8M4 8.500h8M4 10.500h5" stroke="#a0a0a0" /></I>],
];

const DRAW_TOOLS = [
  ['Pitchfork', <I smooth><path d="M1 15l9-9M6 3l-1 4l4 4h4M8 7l5-6M10 6l5-4" /></I>],
  ['Vertical grid', <I><path d="M1.500 1v14M4.500 1v14M7.500 1v14M11.500 1v14M15.500 1v14" /></I>],
  ['Horizontal lines', <I><path d="M0 2.500h16M0 6.500h16M0 10.500h16M0 14.500h16" /></I>],
  ['Calculator', <I><path d="M0 1.500h16M2 4.500h14" /><path d="M5.500 6.500h7v9h-7z" fill="#fff" stroke="#000080" /><path d="M7 8.500h4M7 11.500h1M10 11.500h1M7 13.500h1M10 13.500h1" stroke="#000080" /></I>],
  ['Speed arcs', <I smooth><path d="M1 13a6 6 0 0 1 12 0M4 13a3 3 0 0 1 7 0M6 14l9-10" /></I>],
  ['Fan', <I smooth><path d="M0 15l15-4M0 15l15-9M0 15l12-14" strokeDasharray="2 1.500" /><path d="M1 15h15" /></I>],
  ['Retracement', <I><path d="M0 15l5-4l2 3l0-13M9 2.500h6M9 5.500h6M9 8.500h6M9 11.500h6" /></I>],
  ['Time zones', <I><path d="M0 2l5 5v-1M6.500 1v14M10.500 1v14M14.500 1v14" /></I>],
  ['Gann fan', <I smooth><path d="M0 15l14-13M0 15l15-7" /><path d="M0 15l15-3" stroke="#800080" /><path d="M0 15h15" /></I>],
  ['Extend', <I><path d="M1 8.500h14M4 6l-3 2.500l3 2.500M12 6l3 2.500l-3 2.500" /></I>],
  ['Parallel', <I smooth><path d="M1 12l9-10M4 14l9-10M7 15l8-9" /></I>],
  ['Cycle', <I smooth><path d="M1 15v-7a7 7 0 0 1 14 0v7l-3-4l-2 3l-2-4l-2 4l-2-4z" /></I>],
  ['Pencil', <I smooth><path d="M8 11l4-10l3 1l-4 10l-3 2z" fill="#ffff00" /><path d="M0 15.500h8l2-4" /></I>],
  null,
  ['Arc', <I smooth><path d="M2 14c7 0 10-5 10-11" /></I>],
  ['Down arrow', <I><path d="M7 3h2v5h2l-3 5l-3-5h2z" fill="#f00" stroke="#f00" /></I>],
  ['Up arrow', <I><path d="M7 13h2v-5h2l-3-5l-3 5h2z" fill="#00f" stroke="#00f" /></I>],
  ['Ellipse', <I smooth><ellipse cx="8" cy="8" rx="7" ry="5.500" /></I>],
  ['Rectangle', <I><path d="M1.500 1.500h13v13h-13z" /></I>],
];

const Divider = () => <span className="mx-[3px] h-6 w-0.5 shrink-0 border-l border-[#a0a0a0] bg-white" />;
const Grip = () => <span className="h-7 w-0 shrink-0 border-l-2 border-dotted border-[#a8a8a8]" />;

const Tools = ({ items }) =>
  items.map((item, i) =>
    item ? (
      <button
        key={item[0]}
        aria-label={item[0]}
        className={
          item[2]
            ? 'flex h-[22px] w-[23px] shrink-0 items-center justify-center border border-[#a0a0a0] bg-white'
            : 'flex h-[22px] w-[23px] shrink-0 items-center justify-center'
        }
      >
        {item[1]}
      </button>
    ) : (
      <Divider key={i} />
    )
  );

const TitleBar = () => (
  <header className="flex h-7 shrink-0 items-start border-b border-[#3b4a5c] bg-[linear-gradient(90deg,#b4cade_0%,#cfdde9_14%,#b9cfe2_30%,#b5d4f0_42%,#9fcbf6_46%,#9cc8f3_53%,#6f9cc8_58%,#7fb0e0_62%,#a2cefa_68%,#9cc9f6_77%,#234e7c_79%,#2b5987_90%,#3c6794_100%)]">
    <svg viewBox="0 0 18 24" className="ml-0.5 mt-0.5 h-[22px] w-4">
      <path d="M2 9c2-7 8-9 12-7c3 4 2 9 0 14c-2 4-5 5-6 6c0-5 4-8 3-12c-1-3-4-3-6 0l-3 6c-1-2-1-4 0-7z" fill="#2464e0" stroke="#0b2a9c" />
      <path d="M3 16c2-6 6-8 9-7M9 4l4 2" stroke="#7fb8ff" fill="none" />
    </svg>
    <h1 className="ml-2 whitespace-pre text-[14px] leading-[30px] text-black">
      {'TradeStation 8.1 - STOX_FIB - Untitled Workspace:  8 - [Chart Analysis - GS:STOXX50-DT  4 min  [EUREX] STOXX FUTURES]'}
    </h1>
    <div className="ml-auto mr-0.5 flex h-[25px] overflow-hidden rounded-b-md border border-t-0 border-[#1c2c40] shadow-[0_0_0_1px_rgba(255,255,255,0.4)]">
      <button aria-label="Minimize" className="flex w-[38px] items-center justify-center border-r border-[#22364e] bg-[linear-gradient(#93acc6_0%,#6d8bab_45%,#33557b_50%,#527aa5_100%)]">
        <span className="mt-2 h-[5px] w-4 border border-[#555] bg-white" />
      </button>
      <button aria-label="Restore" className="flex w-9 items-center justify-center border-r border-[#22364e] bg-[linear-gradient(#93acc6_0%,#6d8bab_45%,#33557b_50%,#527aa5_100%)]">
        <svg viewBox="0 0 20 18" className="h-[18px] w-5" fill="#fff" stroke="#555">
          <path d="M6.500 1.500h12v11h-12z" />
          <path d="M1.500 4.500h12v12h-12z" />
          <path d="M5.500 8.500h4v4h-4z" fill="#5a7ca0" />
        </svg>
      </button>
      <button aria-label="Close" className="flex w-[63px] items-center justify-center bg-[linear-gradient(#e2a594_0%,#d5816d_45%,#c0301a_50%,#d4573a_100%)]">
        <svg viewBox="0 0 18 16" className="h-4 w-[18px]">
          <path d="M1 1h5l3 4l3-4h5l-5.500 7l5.500 7h-5l-3-4l-3 4h-5l5.500-7z" fill="#fff" stroke="#554" />
        </svg>
      </button>
    </div>
  </header>
);

const ChildButtons = () => (
  <div className="flex h-7 shrink-0 gap-px">
    {[
      ['Minimize chart', <path d="M5 11.500h6" strokeWidth="2" />],
      ['Restore chart', <path d="M6.500 6v-2.500h6v5h-2.500M4 7.500h6v5h-6zM6 4.500h6M4 8.500h6" />],
      ['Close chart', <path d="M5 4.500l6 7m0-7l-6 7" strokeWidth="2.500" />],
    ].map(([label, shape]) => (
      <button key={label} aria-label={label} className="flex w-[23px] shrink-0 items-center justify-center border border-[#9fb0c4] bg-[#dceaf7]">
        <svg viewBox="0 0 16 16" className="h-4 w-4" fill="none" stroke="#6f7f90">{shape}</svg>
      </button>
    ))}
  </div>
);

const MenuBar = () => (
  <nav className="flex h-[30px] shrink-0 items-center border-b border-[#a5a8b0] bg-[linear-gradient(#ffffff_0%,#f2f4fa_30%,#d5dbec_34%,#e0e6f6_90%,#ffffff_100%)]">
    <svg viewBox="0 0 19 16" className="ml-[7px] h-4 w-[19px]" shapeRendering="crispEdges" fill="none">
      <path d="M0 0h19v16h-19z" fill="#000" />
      <path d="M0 .5h19" stroke="#0000d0" strokeWidth="2" />
      <path d="M1 13l2-5l2 2l2-4l2 3l2-4l2 3l2-4" stroke="#00b000" />
      <path d="M0 13.500h19M16.500 2v14" stroke="#a00000" strokeDasharray="1 1" />
    </svg>
    <ul className="ml-2 mt-0.5 flex gap-[14px] text-[14px] text-[#1a1a1a]">
      {['File', 'Edit', 'View', 'Insert', 'Format', 'Drawing', 'Window', 'Help'].map((item) => (
        <li key={item}><button>{item}</button></li>
      ))}
    </ul>
    <div className="ml-auto"><ChildButtons /></div>
  </nav>
);

const Toolbar = () => (
  <div className="flex h-8 shrink-0 items-center overflow-hidden border-b-2 border-[#8a8a8a] bg-[#f0f0f0] pt-0.5">
    <div className="ml-[25px] flex items-center">
      <Grip />
      <div className="ml-[3px] flex items-center"><Tools items={FILE_TOOLS} /></div>
    </div>
    <div className="ml-0.5 flex h-6 w-[136px] shrink-0 items-center border border-[#e0e0e0] bg-white">
      <input
        aria-label="Symbol"
        placeholder="Type a symbol/co"
        className="w-[116px] pl-0.5 font-['Liberation_Sans',Arial,sans-serif] text-[14px] outline-none placeholder:text-[#808080]"
      />
      <button aria-label="Symbol list" className="ml-0.5">
        <svg viewBox="0 0 10 6" className="h-1.5 w-2.5"><path d="M0 0h10l-5 6z" /></svg>
      </button>
    </div>
    <button aria-label="Go" className="ml-[6px] mr-[13px] shrink-0">
      <svg viewBox="0 0 6 10" className="h-2.5 w-1.5"><path d="M0 0v10l6-5z" /></svg>
    </button>
    <Tools items={PICK_TOOLS} />
    <div className="ml-4 flex items-center">
      <Grip />
      <div className="ml-[3px] flex items-center"><Tools items={CHART_TOOLS} /></div>
    </div>
    <div className="ml-[26px] flex items-center">
      <Grip />
      <div className="ml-1 flex items-center">
        <Tools items={DRAW_TOOLS} />
        <button className="ml-[3px] font-['Liberation_Sans',Arial,sans-serif] text-[12px] text-black">abc</button>
      </div>
    </div>
  </div>
);

const Legends = () => (
  <div className="relative flex h-full flex-col whitespace-nowrap pl-px text-[16px] leading-5 text-white">
    <div className="flex min-h-0 flex-[469_0_0] pt-px">
      <p className="flex gap-[11px]">
        <span className="mr-1.5 text-[#ffff00]">GS:STOXX50-DT - 4 min</span>
        <span className="text-[#ffff00]">EUREX</span>
        <span>01/19/2023</span>
        <span className="text-[#00ff00]">L=4141.000</span>
        <span>Hi=4166.000</span>
        <span>Lo=4139.000</span>
        <span className="text-[#00ff00]">C=4141.000</span>
        <span>Leo Chart</span>
      </p>
      <p className="ml-[18px] flex gap-[11px]">
        <span className="text-[#00ffff]">-7.98</span>
        <span className="text-[#ff0000]">8.00</span>
        <span className="text-[#ff0000]">-8.00</span>
        <span className="text-[#6b6b00]">4.00</span>
        <span className="text-[#6b6b00]">-4.00</span>
        <span className="text-[#0000ff]">0.00</span>
      </p>
    </div>
    <div className="flex min-h-0 flex-[216_0_0]">
      <p className="flex gap-[11px]">
        <span className="mr-2.5">CCI Smothing ekam</span>
        <span className="text-[#00ffff]">-138.92</span>
        <span className="text-[#808080]">120.00</span>
        <span className="text-[#808080]">-120.00</span>
        <span className="text-[#404040]">-138.92</span>
        <span className="mr-6">Stoc colore</span>
        <span className="text-[#c05a00]">-1.00</span>
        <span className="mr-10">Macd ciclico 2</span>
        <span className="text-[#800080]">0.00</span>
      </p>
    </div>
    <div className="flex min-h-0 flex-[215_0_0]">
      <p className="flex gap-[11px]">
        <span className="mr-2">DMI</span>
        <span className="text-[#00ff00]">13.47</span>
        <span className="text-[#ff00ff]">28.55</span>
      </p>
    </div>
  </div>
);

const ScrollBar = () => (
  <div className="flex h-[22px] shrink-0 items-center border-t border-white bg-[#ececec] px-[9px]">
    <button aria-label="Scroll left">
      <svg viewBox="0 0 5 10" className="h-2.5 w-[5px]"><path d="M5 0v10l-5-5z" fill="#333" /></svg>
    </button>
    <button aria-label="Scroll position" className="ml-auto mr-2.5 flex h-5 w-5 items-center justify-center gap-0.5 rounded-sm border border-[#909090] bg-[linear-gradient(#f4f4f4,#d0d0d0)]">
      <span className="h-2 w-0.5 bg-[#777]" />
      <span className="h-2 w-0.5 bg-[#777]" />
      <span className="h-2 w-0.5 bg-[#777]" />
    </button>
    <button aria-label="Scroll right">
      <svg viewBox="0 0 5 10" className="h-2.5 w-[5px]"><path d="M0 0v10l5-5z" fill="#333" /></svg>
    </button>
  </div>
);

const TABS = [
  'STOX_TF60', 'STOX_TF120', 'STOX TF240', 'STOX _100', 'STOX_TF30', 'FIB_TF60', 'FIB_TF120',
  'FIB TF240', 'FIB_100', 'FIB_TF30', 'FIB Frame bassi', 'STOXX frame bassi', 'No PREZZI',
];

const Edge = ({ d, fill = 'none' }) => (
  <svg viewBox="0 0 8 17" className="h-[17px] w-2 shrink-0" fill={fill} stroke="#000"><path d={d} /></svg>
);

const SheetTabs = () => (
  <div className="flex h-[18px] shrink-0 items-stretch overflow-hidden border-b border-[#808080] bg-[#f0f0f0]">
    <div className="mt-[3px] flex">
      {[
        ['First', 'M5.500 4v7M11 4v7l-4-3.500z'],
        ['Previous', 'M10 4v7l-4-3.500z'],
        ['Next', 'M6 4v7l4-3.500z'],
        ['Last', 'M5 4v7l4-3.500zM10.500 4v7'],
      ].map(([label, d]) => (
        <button key={label} aria-label={label} className="flex w-4 items-center justify-center border border-l-white border-t-white border-b-[#777] border-r-[#777]">
          <svg viewBox="0 0 16 15" className="h-[13px] w-[15px]" fill="#555" stroke="#555"><path d={d} /></svg>
        </button>
      ))}
    </div>
    <div className="flex flex-1 border-t border-black pl-px font-['Liberation_Sans',Arial,sans-serif] text-[12px] leading-[17px] text-black">
      <Edge d="M1 0l5 16h2" />
      {TABS.map((tab, i) => (
        <React.Fragment key={tab}>
          {i > 0 && <Edge d="M0 16h1l3-8M1 0l6 16h1" />}
          <button className="whitespace-nowrap border-b border-black px-[7px]">{tab}</button>
        </React.Fragment>
      ))}
      <Edge d="M0 16h1l3-8M1 0l6 16h1" />
      <button className="whitespace-pre border-b border-black bg-white px-1 font-bold">Untitled Workspace:  8</button>
      <Edge d="M0 16h2l6-16" />
    </div>
  </div>
);

const StatusBar = () => (
  <footer className="flex h-[22px] shrink-0 items-stretch whitespace-nowrap border-b-2 border-[#5f7f9c] bg-[#f0eeed] text-[14px] leading-[23px] text-[#111]">
    <p className="pl-[3px]">For Help, press F1</p>
    <div className="ml-auto flex">
      <span className="pr-[14px]">Acct:</span>
      <span className="border-l border-[#d8d4d4] pl-1 pr-[14px]">Open Psns:</span>
      <span className="border-l border-[#d8d4d4] pl-1 pr-[14px]">DT BP:</span>
      <span className="border-l border-[#d8d4d4] pl-1 pr-[14px]">Purch Pwr:</span>
      <span className="border-l border-[#d8d4d4] pl-1 pr-[14px]">Closed P/L:</span>
      <span className="border-l border-[#d8d4d4] pl-1 pr-[14px]">RT TE:</span>
      <span className="border-l border-[#d8d4d4] pl-1 pr-[14px]">Open P/L:</span>
      <a href="#orders" className="border-l border-[#d8d4d4] px-1 text-[#158015]">ORDER BAR</a>
      <a href="#macros" className="border-l border-[#d8d4d4] px-1 text-[#158015]">MACROS</a>
      <span className="flex w-[18px] justify-center border-l border-[#d8d4d4] pt-0.5">
        <svg viewBox="0 0 12 12" className="h-3 w-3">
          <circle cx="6" cy="6" r="5.500" fill="#5a0000" />
          <circle cx="5.500" cy="5.500" r="4.500" fill="#e80000" />
          <circle cx="4" cy="4" r="1.200" fill="#fff" />
        </svg>
      </span>
      <span className="border-l border-[#d8d4d4] px-1">19/01/2023 10:55</span>
    </div>
  </footer>
);

const App = () => (
  <div className="flex h-screen min-h-[600px] flex-col overflow-hidden bg-[#f0f0f0] font-['Noto_Sans','Open_Sans',sans-serif]">
    <TitleBar />
    <MenuBar />
    <Toolbar />
    <main className="flex min-h-0 flex-1 flex-col border-l-2 border-r-2 border-l-[#808080] border-r-[#e0e0e0] bg-black">
      <div className="relative flex min-h-0 flex-1 overflow-hidden">
        <LeftAxis />
        <div className="relative min-w-0 flex-1 overflow-hidden font-['Liberation_Sans',Arial,sans-serif]">
          <Plot />
          <Legends />
        </div>
        <RightAxis />
        <div className="absolute right-0 top-1.5 w-[60px] overflow-hidden border-t border-white">
          <ChildButtons />
        </div>
      </div>
      <TimeAxis />
    </main>
    <ScrollBar />
    <SheetTabs />
    <StatusBar />
  </div>
);

export default App;
